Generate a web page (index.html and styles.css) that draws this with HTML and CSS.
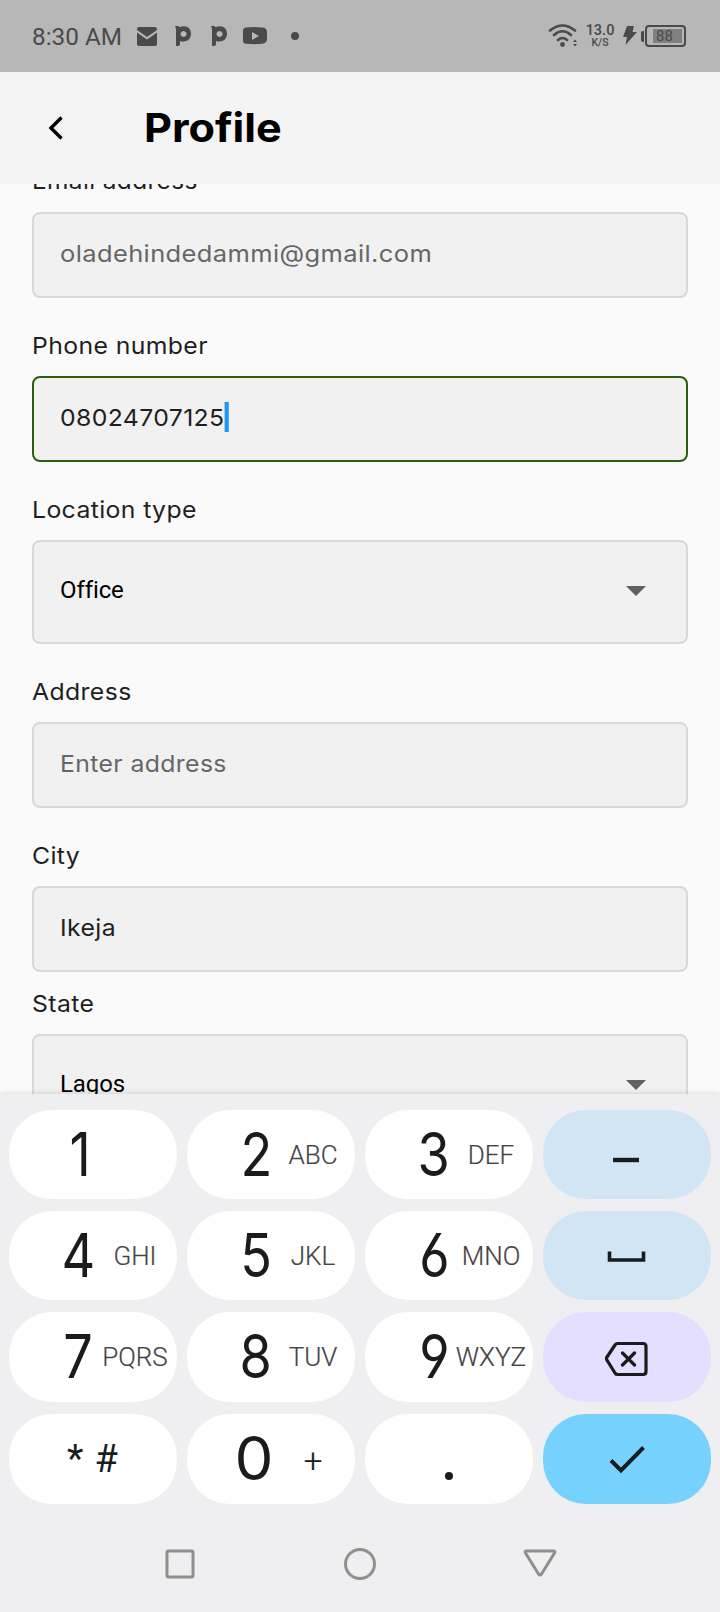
FILE: index.html
```html
<!DOCTYPE html>
<html lang="en">
<head>
<meta charset="utf-8">
<title>Profile</title>
<link rel="stylesheet" href="styles.css">
</head>
<body>
<div class="screen">
  <div class="status">
    <span class="time">8:30 AM</span>
    <svg class="notices" width="170" height="30" viewBox="0 0 170 30">
      <path d="M1 5V4q0-2 2-2h16q2 0 2 2v1l-10 7zM1 7.500l10 7 10-7V19q0 2-2 2H3q-2 0-2-2z"/>
      <path id="pmark" fill-rule="evenodd" d="M39 1h3.500l1 1.300C50 -.5 55 3 55 8.800c0 6-5 9-11 7.200v3q0 2-2 2h-2V4zM47.500 6a3 3 0 1 0 .1 0z"/>
      <use href="#pmark" x="36"/>
      <path fill-rule="evenodd" d="M110 2.500q8-1 16 0 5 0 5 5v6q0 5-5 5.300-8 .8-16 0-3 0-3-3V6q0-3.500 3-3.500zM116 7v8l7-4z"/>
      <circle cx="159" cy="11" r="4"/>
    </svg>
    <svg class="wifi" width="32" height="26" viewBox="0 0 32 26">
      <g fill="none" stroke="#4a4a4a" stroke-width="2.600" stroke-linecap="round">
        <path d="M3 7.500Q15.500-2.500 28 7.500M7 12Q15.500 4.500 24 12M11 17q4.500-4 9 0"/>
      </g>
      <circle cx="15.500" cy="21.500" r="2.400"/>
      <path d="M26 19l2-2.500 2 2.500zM26 21h4l-2 2.500z"/>
    </svg>
    <span class="rate"><b>13.0</b><small>K/S</small></span>
    <svg class="bolt" width="16" height="22" viewBox="0 0 16 22"><path d="M5 1h7l-1.500 6H15L3.500 20 5 12H1z"/></svg>
    <span class="tip"></span>
    <span class="battery"><span class="level">88</span></span>
  </div>
  <header class="bar">
    <svg width="16" height="26" viewBox="0 0 16 26"><path d="M13.500 2.500L3 13l10.500 10.500" fill="none" stroke="#000" stroke-width="3.400"/></svg>
    <h1>Profile</h1>
  </header>
  <main class="form">
    <div class="label first"><span>Email address</span></div>
    <div class="field muted email"><span>oladehindedammi@gmail.com</span></div>
    <div class="label"><span>Phone number</span></div>
    <div class="field active"><span>08024707125<i class="caret"></i></span></div>
    <div class="label"><span>Location type</span></div>
    <div class="field select">Office<i class="arrow"></i></div>
    <div class="label"><span>Address</span></div>
    <div class="field muted"><span>Enter address</span></div>
    <div class="label"><span>City</span></div>
    <div class="field"><span>Ikeja</span></div>
    <div class="label near"><span>State</span></div>
    <div class="field select">Lagos<i class="arrow"></i></div>
  </main>
  <section class="keyboard">
    <div class="key"><b class="one">1</b></div>
    <div class="key"><b>2</b><span>ABC</span></div>
    <div class="key"><b>3</b><span>DEF</span></div>
    <div class="key icon blue"><svg width="40" height="40" viewBox="0 0 40 40"><path d="M6 25H32" stroke-width="4.400"/></svg></div>
    <div class="key"><b>4</b><span>GHI</span></div>
    <div class="key"><b>5</b><span>JKL</span></div>
    <div class="key"><b>6</b><span>MNO</span></div>
    <div class="key icon blue"><svg width="40" height="40" viewBox="0 0 40 40"><path d="M2.500 15.500v8.500H36.500v-8.500" stroke-width="3.600"/></svg></div>
    <div class="key"><b>7</b><span>PQRS</span></div>
    <div class="key"><b>8</b><span>TUV</span></div>
    <div class="key"><b>9</b><span>WXYZ</span></div>
    <div class="key icon violet"><svg width="44" height="40" viewBox="0 0 44 40"><path d="M12.500 6.500H38q3 0 3 3v25q0 3-3 3H12.500q-1.500 0-2.500-1.500L1 21.500 10 8q1-1.500 2.500-1.500zM17.500 16l12 12M29.500 16L17.500 28" stroke-width="3.200" stroke-linecap="round" stroke-linejoin="round"/></svg></div>
    <div class="key symbols"><em>*</em><em>#</em></div>
    <div class="key"><b class="zero">0</b><span class="plus">+</span></div>
    <div class="key dot"><i></i></div>
    <div class="key icon sky"><svg width="40" height="40" viewBox="0 0 40 40"><path d="M4 21.500l10 10L36.500 8.500" stroke-width="4"/></svg></div>
  </section>
  <nav class="nav">
    <svg width="34" height="34" viewBox="0 0 34 34"><rect x="4" y="4" width="26" height="26" rx="1.500"/></svg>
    <svg width="34" height="34" viewBox="0 0 34 34"><circle cx="17" cy="17" r="14.500"/></svg>
    <svg width="34" height="34" viewBox="0 0 34 34"><path d="M3.500 4h27q2 0 1 2L18.500 27q-1.500 2-3 0L2.500 6q-1-2 1-2z"/></svg>
  </nav>
</div>
</body>
</html>
```
FILE: styles.css
```css
* { box-sizing: border-box; }
body { margin: 0; }
.screen {
  width: 720px;
  height: 1612px;
  display: flex;
  flex-direction: column;
  overflow: hidden;
  background: #fafafa;
  font-family: Inter, "Liberation Sans", sans-serif;
}
.status {
  height: 72px;
  flex: none;
  display: flex;
  align-items: center;
  padding: 0 33px 0 32px;
  background: #b7b7b7;
  color: #4a4a4a;
  font-family: Roboto, sans-serif;
}
.status svg { fill: #4a4a4a; flex: none; }
.time { width: 104px; font-size: 24.300px; line-height: 30px; white-space: nowrap; padding-top: 2px; font-weight: 400; }
.notices { margin-top: 8px; }
.wifi { margin: 0 0 0 241px; }
.rate { width: 28px; margin-left: 7px; display: flex; flex-direction: column; align-items: center; }
.rate b { font-size: 14.500px; line-height: 14px; font-weight: 500; }
.rate small { font-size: 10.500px; line-height: 10px; font-weight: 500; }
.bolt { margin-left: 8px; }
.tip { width: 3px; height: 11px; margin-left: 3px; border-radius: 2px 0 0 2px; background: #4a4a4a; }
.battery { width: 41px; height: 22px; margin-left: 1px; border: 2px solid #4a4a4a; border-radius: 4px; padding: 2px 2px 2px 6px; display: flex; }
.level { width: 29px; height: 14px; background: #808080; font-size: 15px; line-height: 15px; padding-left: 3px; }
.bar {
  height: 112px;
  flex: none;
  display: flex;
  align-items: center;
  gap: 80px;
  padding-left: 48px;
  background: #f4f4f4;
}
.bar h1 { margin: 0; font-size: 40px; font-weight: 700; line-height: 48px; color: #000; transform: scaleX(1.08); transform-origin: left; }
.form { height: 910px; flex: none; overflow: hidden; padding: 0 32px; color: #1f1f1f; }
.label, .field { font-size: 23.500px; letter-spacing: .35px; }
.label { line-height: 30px; padding-top: 33px; height: 78px; white-space: nowrap; }
.label span, .field span { display: inline-flex; align-items: center; transform: scaleX(1.055); transform-origin: left; }
.label.first { display: flex; align-items: flex-end; height: 28px; padding: 0 0 16px; }
.label.first span { transform: scaleX(1.04); }
.label.near { height: 62px; padding-top: 17px; }
.field {
  height: 86px;
  display: flex;
  align-items: center;
  padding: 0 26px 4px;
  border: 2px solid #d9d9d9;
  border-radius: 8px;
  background: #f1f1f1;
}
.email span { transform: scaleX(1.085); }
.muted { color: #666; }
.active { border-color: #2b5f0a; }
.caret { width: 4px; height: 30px; background: #2196f3; }
.select { height: 104px; justify-content: space-between; padding: 0 40px 4px 26px; font-family: Roboto, sans-serif; font-size: 24px; letter-spacing: -.1px; font-variant-ligatures: common-ligatures; color: #000; }
.arrow { margin-top: 2px; border: 10px solid transparent; border-top-color: #616161; border-bottom: 0; }
.keyboard {
  height: 410px;
  flex: none;
  display: grid;
  grid-template: 89px 89px 90px 90px / repeat(4, 168px);
  gap: 12px 10px;
  padding: 16px 9px;
  background: #efeff1;
  box-shadow: 0 -1px 5px rgba(0, 0, 0, .12);
}
.key {
  display: grid;
  grid-template-columns: 42px 54px 60px;
  align-items: center;
  justify-items: center;
  border-radius: 43px;
  background: #fff;
  color: #191c1e;
  font-family: Roboto, sans-serif;
}
.key b {
  grid-column: 2;
  font-family: Inter, sans-serif;
  font-size: 60px;
  font-weight: 400;
  line-height: 80px;
  padding-bottom: 2px;
  font-feature-settings: "cv03", "cv04";
  transform: scaleX(.87);
}
.key .one { transform: translateX(2px) scaleX(.87); }
.key .zero { transform: translateX(-2px) scaleX(1.03); }
.key span { grid-column: 3; font-size: 26px; font-weight: 300; line-height: 30px; color: #444; -webkit-text-stroke: .2px; }
.key .plus { font-size: 33px; color: #191c1e; font-weight: 300; padding-top: 4px; }
.icon { display: flex; justify-content: center; }
.icon svg { fill: none; stroke: #191c1e; }
.blue { background: #d2e5f4; }
.violet { background: #e4deff; }
.sky { background: #76d1ff; }
.symbols { display: flex; gap: 11px; padding-left: 58px; font-size: 38px; }
.symbols em { font-style: normal; }
.dot { display: block; padding: 58px 0 0 80px; justify-items: start; }
.dot i { display: block; width: 8px; height: 8px; border-radius: 50%; background: #191c1e; }
.nav { flex: 1; display: flex; align-items: flex-start; gap: 146px; padding: 43px 0 0 163px; background: #efeff1; }
.nav svg { fill: none; stroke: #8f8f8f; stroke-width: 3; }
```
